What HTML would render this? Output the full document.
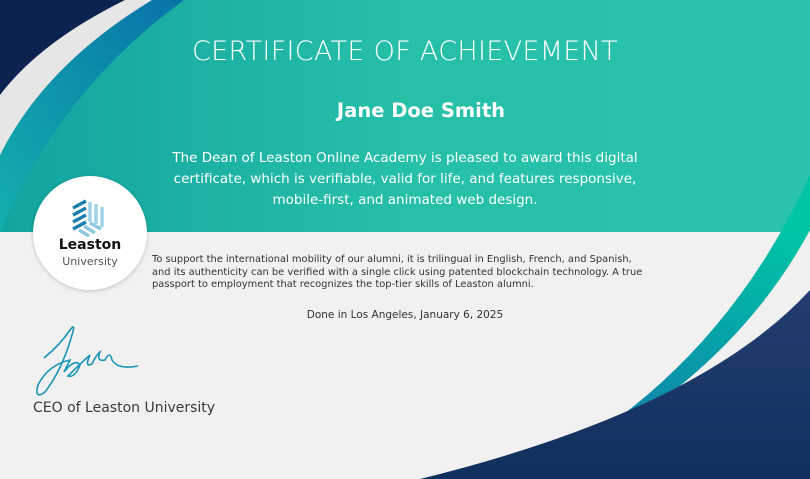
<!DOCTYPE html>
<html><head><style>
body{margin:0;width:810px;height:479px;overflow:hidden;background:#f1f1f1;font-family:"DejaVu Sans","Liberation Sans",sans-serif;position:relative}
.t{position:absolute;left:0;width:810px;text-align:center;color:#fff}
</style></head><body>
<svg width="810" height="479" style="position:absolute;left:0;top:0">
<defs>
<linearGradient id="tl" x1="0" y1="0" x2="1" y2="0"><stop offset="0" stop-color="#15a6a6"/><stop offset=".5" stop-color="#2cc6b0"/><stop offset="1" stop-color="#2fcab5"/></linearGradient>
<linearGradient id="bb" x1="0" y1="1" x2="0.3" y2="0"><stop offset="0" stop-color="#1270a8"/><stop offset=".6" stop-color="#06a3a8"/><stop offset="1" stop-color="#00c4a6"/></linearGradient>
<linearGradient id="nv" x1="0" y1="0" x2="0" y2="1"><stop offset="0" stop-color="#233e6e"/><stop offset="1" stop-color="#10305e"/></linearGradient>
<linearGradient id="lb" x1="0" y1="1" x2="1" y2="0"><stop offset="0" stop-color="#13b0ad"/><stop offset="1" stop-color="#0872a8"/></linearGradient>
</defs>
<rect x="0" y="0" width="810" height="232" fill="url(#tl)"/>
<rect x="0" y="0" width="810" height="232" fill="#0a9a80" opacity=".15"/>
<path d="M0 0 H184 Q60 90 0 232 Z" fill="url(#lb)"/>
<path d="M0 0 H152 Q45 65 0 155 Z" fill="#e6e6e6"/>
<path d="M0 0 H125 Q40 42 0 95 Z" fill="#0c2350"/>
<path d="M810 175 Q730 350 578 446 L810 479 Z" fill="url(#bb)"/>
<path d="M810 230 Q740 360 598 442 L810 479 Z" fill="#f0f0f0"/>
<path d="M810 290 Q700 410 420 479 H810 Z" fill="url(#nv)"/>
<path d="M44 358 Q60 345 70 330 Q76 322 72 335 Q62 370 45 392 Q34 400 38 385 Q48 365 70 360 Q66 368 64 372 Q75 358 80 365 Q75 378 68 376 Q82 362 90 355 Q84 368 92 364 Q96 355 100 352 Q96 362 105 360 Q110 350 112 360 Q118 370 138 366" fill="none" stroke="#1a95b8" stroke-width="1.6"/>
</svg>
<div class="t" style="top:36px;font-size:27px;font-weight:200;letter-spacing:0.3px;font-family:'DejaVu Sans ExtraLight','DejaVu Sans',sans-serif">CERTIFICATE OF ACHIEVEMENT</div>
<div class="t" style="top:99px;font-size:19.5px;font-weight:bold;padding-left:32px;box-sizing:border-box">Jane Doe Smith</div>
<div class="t" style="top:148px;font-size:13.5px;line-height:21px">The Dean of Leaston Online Academy is pleased to award this digital<br>certificate, which is verifiable, valid for life, and features responsive,<br>mobile-first, and animated web design.</div>
<div style="position:absolute;left:33px;top:176px;width:114px;height:114px;border-radius:50%;background:#fff;box-shadow:0 1px 4px rgba(0,0,0,.2)">
<svg width="40" height="40" style="position:absolute;left:38px;top:22px" viewBox="0 0 40 40">
<g stroke-width="3.5" fill="none">
<path d="M2 8 L15 1 M2 15 L15 8 M2 22 L15 15 M2 29 L15 22" stroke="#1b7fae" transform="translate(0,2)"/>
<path d="M19 4 V24 M25 6 V26 M31 9 V29" stroke="#9fd3e6"/>
<path d="M8 32 L18 38 M13 28 L24 35 M19 25 L30 31" stroke="#8ecae2"/>
</g></svg>
<div style="position:absolute;top:61px;width:114px;text-align:center;font-weight:bold;font-size:14px;color:#111">Leaston</div>
<div style="position:absolute;top:79px;width:114px;text-align:center;font-size:11px;color:#555">University</div>
</div>
<div style="position:absolute;left:152px;top:254px;font-size:9.9px;line-height:12.5px;color:#333">To support the international mobility of our alumni, it is trilingual in English, French, and Spanish,<br>and its authenticity can be verified with a single click using patented blockchain technology. A true<br>passport to employment that recognizes the top-tier skills of Leaston alumni.</div>
<div style="position:absolute;left:0;width:810px;top:309px;text-align:center;font-size:10.5px;color:#333">Done in Los Angeles, January 6, 2025</div>
<div style="position:absolute;left:33px;top:400px;font-size:14px;color:#3a3a3a">CEO of Leaston University</div>
</body></html>
